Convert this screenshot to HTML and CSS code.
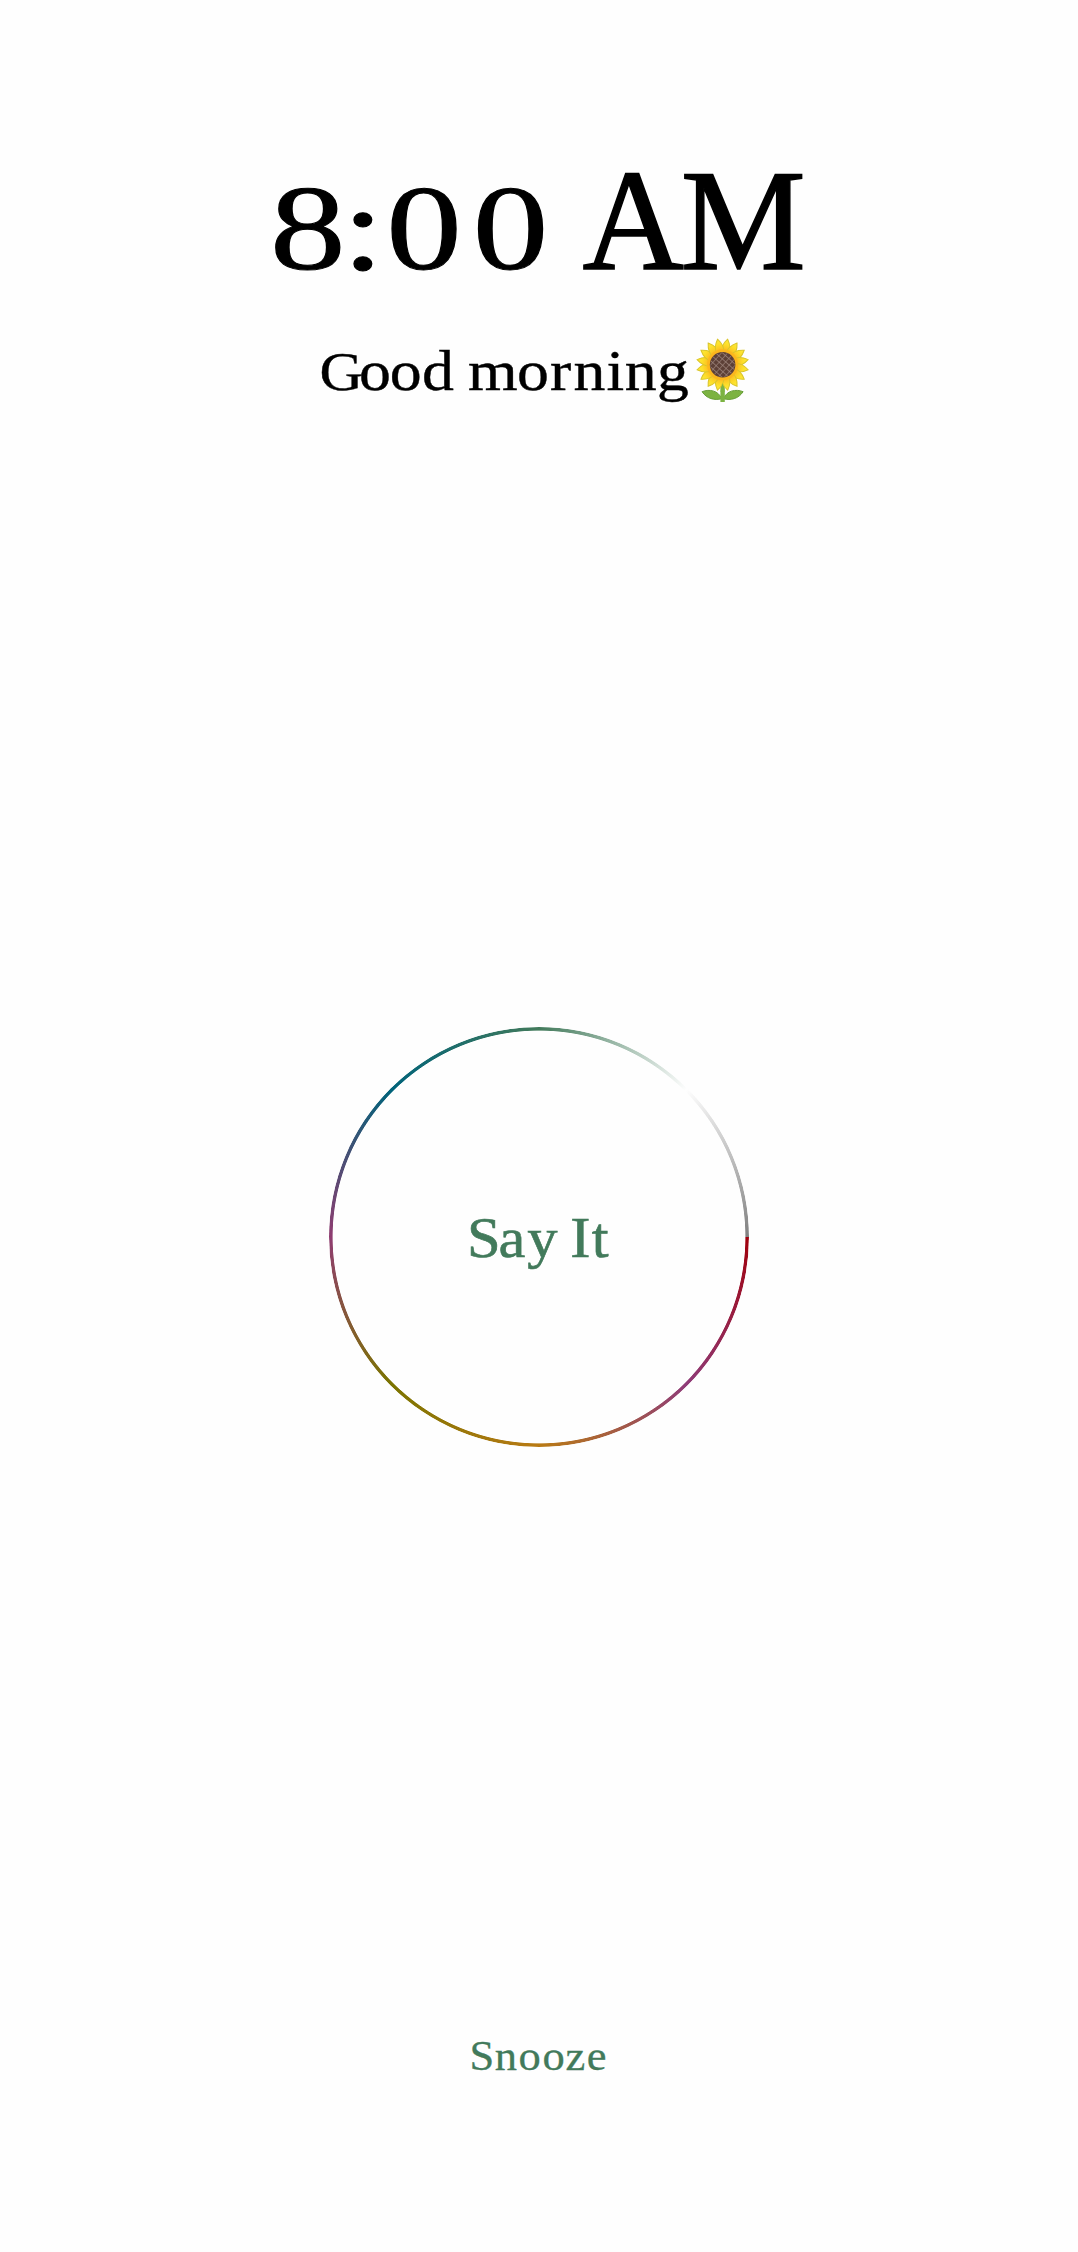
FILE: index.html
```html
<!DOCTYPE html>
<html lang="en">
<head>
<meta charset="utf-8">
<title>Alarm</title>
<link rel="stylesheet" href="styles.css">
</head>
<body>
<main class="alarm">
  <header class="heading">
    <svg class="time" viewBox="0 0 1078 300">
      <text class="digits" transform="scale(1.26 1)" y="269.5" x="214.2 271.5 306.5 375.3">8:00</text>
      <text class="period" transform="scale(.97 1)" y="269.5" x="600.5 701.9">AM</text>
    </svg>
    <svg class="greeting" viewBox="0 0 1078 130">
      <text class="message" transform="scale(1.1 1)" y="90" x="290.4 326.4 354.4 383.6 413 425.5 469.9 500.1 521.4 551.3 567.9 597.2"><tspan class="initial">G</tspan>ood morning</text>
      <defs>
        <radialGradient id="petal" gradientUnits="userSpaceOnUse" cx="0" cy="0" r="26">
          <stop offset=".5" stop-color="#fcb61d"/>
          <stop offset=".8" stop-color="#fde02b"/>
          <stop offset="1" stop-color="#fee93a"/>
        </radialGradient>
        <path id="p" d="M-3.5-11C-5.4-17-3-22-0-26C3-22 5.4-17 3.5-11Z"/>
        <pattern id="seeds" width="4.6" height="4.6" patternUnits="userSpaceOnUse" patternTransform="rotate(42)">
          <path d="M0 0H4.6M0 0V4.6" stroke="#a1887f" stroke-width="1.2"/>
        </pattern>
      </defs>
      <g transform="translate(722.6 64.7)">
        <path d="M-1 34C-8 36-16 34-20.5 27C-13 24-4 26-1 34ZM1 34C8 36 16 34 20.5 27C13 24 4 26 1 34Z" fill="#7cb342" stroke="#689f38" stroke-width="1"/>
        <path d="M-2.2 18H2.2V37.3H-2.2Z" fill="#7cb342"/>
        <g fill="url(#petal)" stroke="#d9c52c" stroke-width="1">
          <use href="#p" transform="rotate(11.25)"/><use href="#p" transform="rotate(33.75)"/>
          <use href="#p" transform="rotate(56.25)"/><use href="#p" transform="rotate(78.75)"/>
          <use href="#p" transform="rotate(101.25)"/><use href="#p" transform="rotate(123.75)"/>
          <use href="#p" transform="rotate(146.25)"/><use href="#p" transform="rotate(168.75)"/>
          <use href="#p" transform="rotate(191.25)"/><use href="#p" transform="rotate(213.75)"/>
          <use href="#p" transform="rotate(236.25)"/><use href="#p" transform="rotate(258.75)"/>
          <use href="#p" transform="rotate(281.25)"/><use href="#p" transform="rotate(303.75)"/>
          <use href="#p" transform="rotate(326.25)"/><use href="#p" transform="rotate(348.75)"/>
        </g>
        <circle r="15.5" fill="#fcb61d"/>
        <path d="M-2.2 27L0 18.5L2.2 27Z" fill="#7cb342"/>
        <circle r="12.8" fill="#5d4037"/>
        <circle r="12.3" fill="url(#seeds)"/>
      </g>
    </svg>
  </header>
  <button class="speak">
    <svg class="label" viewBox="329 0 420 80">
      <text class="say" transform="scale(1.08 1)" y="59.6" x="432.3 461.5 488.3 515.7 528.1 547.9">Say It</text>
    </svg>
  </button>
  <button class="snooze">
    <svg class="snooze-label" viewBox="439 0 200 60">
      <text class="later" transform="scale(1.06 1)" y="45" x="443 466.8 489.1 511.9 533.4 553.6">Snooze</text>
    </svg>
  </button>
</main>
</body>
</html>
```
FILE: styles.css
```css
body {
  margin: 0;
  background: #fefefe;
  font-family: "Liberation Serif", serif;
}
.alarm {
  box-sizing: border-box;
  width: 1078px;
  height: 2252px;
  padding-bottom: 167px;
  display: flex;
  flex-direction: column;
  align-items: center;
}
svg {
  display: block;
  overflow: visible;
  font-family: "Liberation Serif", serif;
}
.time { width: 1078px; height: 300px; }
.greeting { width: 1078px; height: 130px; }
.digits, .period { stroke: #000; }
.digits { font-size: 120px; stroke-width: 1px; }
.period { font-size: 145px; stroke-width: 1.5px; }
.message {
  font-size: 58px;
  stroke: #000;
  stroke-width: .4px;
}
.initial { font-size: 55px; }
button {
  padding: 0;
  border: 0;
  background: none;
}
.speak {
  position: relative;
  width: 420px;
  height: 420px;
  margin-top: 597px;
  border-radius: 50%;
}
.speak::before {
  content: "";
  position: absolute;
  inset: 0;
  border-radius: 50%;
  background: conic-gradient(from 90deg, #a0000c, #8f3c78 12.5%, #b97a14 25%, #7b7400 37.5%, #8f3c70 50%, #00637a 62.5%, #427a5b 75%, #fefefe 87.5%, #808080);
  mask: radial-gradient(closest-side, transparent 206px, #000 206.8px);
}
.label { width: 420px; height: 80px; }
.say, .later {
  fill: #427a5b;
  stroke: #427a5b;
}
.say { font-size: 56px; stroke-width: .6px; }
.snooze { margin-top: auto; }
.snooze-label { width: 200px; height: 60px; }
.later { font-size: 42px; stroke-width: .3px; }
```
